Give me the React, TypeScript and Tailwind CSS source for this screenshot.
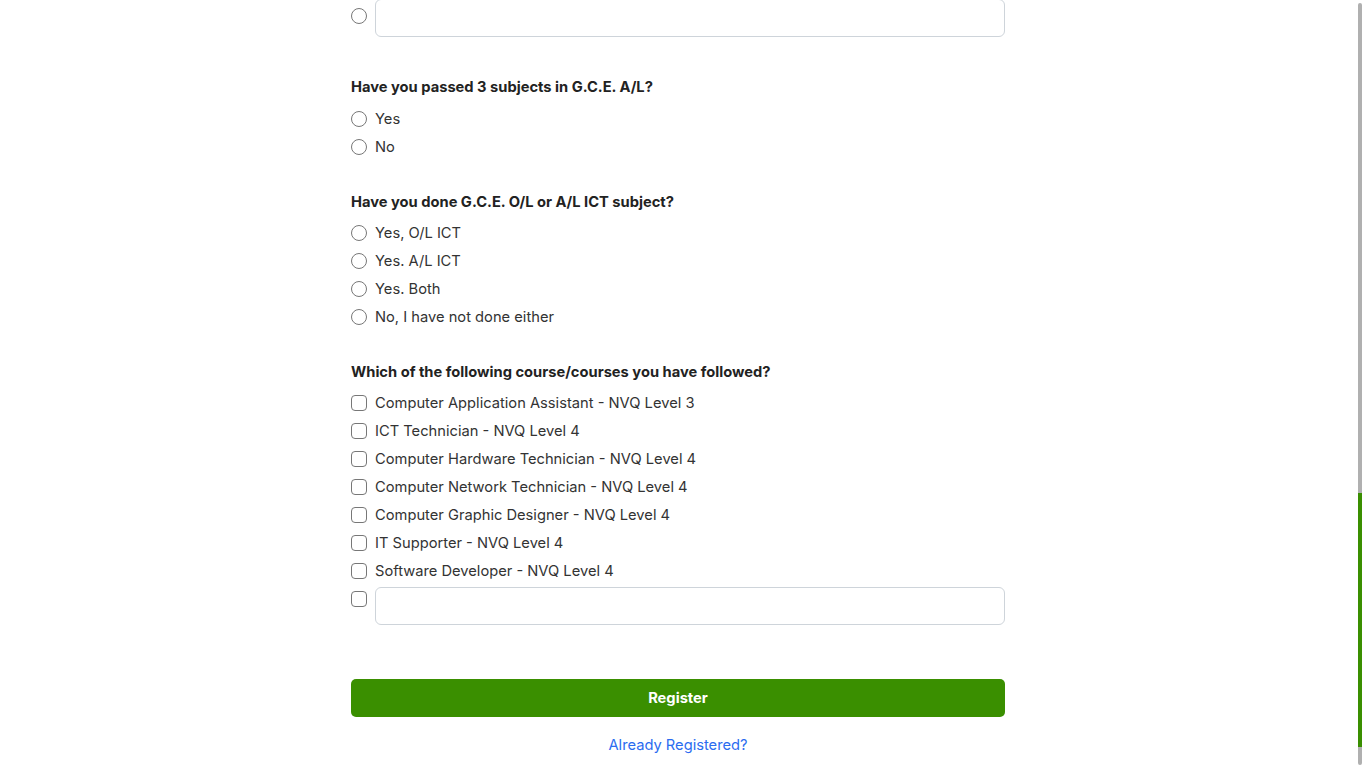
import React from "react";

const font = { fontFamily: "Inter, 'Liberation Sans', sans-serif" };

const RadioRow = ({ label }: { label: string }) => (
  <label className="flex items-center h-7 gap-2 text-[14.7px] text-[#333]">
    <span className="w-4 h-4 rounded-full border border-[#777] bg-white shrink-0" />
    <span>{label}</span>
  </label>
);

const CheckRow = ({ label }: { label: string }) => (
  <label className="flex items-center h-7 gap-2 text-[14.7px] text-[#333]">
    <span className="w-4 h-4 rounded-[4px] border border-[#777] bg-white shrink-0" />
    <span>{label}</span>
  </label>
);

const Question = ({ children }: { children: React.ReactNode }) => (
  <p className="h-[22px] leading-[22px] text-[14.7px] font-bold text-[#222]">{children}</p>
);

export default function App() {
  const courses = [
    "Computer Application Assistant - NVQ Level 3",
    "ICT Technician - NVQ Level 4",
    "Computer Hardware Technician - NVQ Level 4",
    "Computer Network Technician - NVQ Level 4",
    "Computer Graphic Designer - NVQ Level 4",
    "IT Supporter - NVQ Level 4",
    "Software Developer - NVQ Level 4",
  ];

  return (
    <div className="min-h-screen bg-white overflow-hidden" style={font}>
      <div className="flex justify-center pr-[10px]">
        <div className="w-[654px] -mt-px">
          <div className="flex items-start gap-2">
            <span className="mt-[9px] w-4 h-4 rounded-full border border-[#777] shrink-0" />
            <input className="flex-1 h-[38px] rounded-[6px] border border-[#ced4da] px-3 outline-none" />
          </div>

          <div className="mt-[39px]">
            <Question>Have you passed 3 subjects in G.C.E. A/L?</Question>
            <div className="mt-[7px]">
              <RadioRow label="Yes" />
              <RadioRow label="No" />
            </div>
          </div>

          <div className="mt-[30px]">
            <Question>Have you done G.C.E. O/L or A/L ICT subject?</Question>
            <div className="mt-[6px]">
              <RadioRow label="Yes, O/L ICT" />
              <RadioRow label="Yes. A/L ICT" />
              <RadioRow label="Yes. Both" />
              <RadioRow label="No, I have not done either" />
            </div>
          </div>

          <div className="mt-[30px]">
            <Question>Which of the following course/courses you have followed?</Question>
            <div className="mt-[6px]">
              {courses.map((c) => (
                <CheckRow key={c} label={c} />
              ))}
            </div>
            <div className="mt-[2px] flex items-start gap-2">
              <span className="mt-[4px] w-4 h-4 rounded-[4px] border border-[#777] shrink-0" />
              <input className="flex-1 h-[38px] rounded-[6px] border border-[#ced4da] px-3 outline-none" />
            </div>
          </div>

          <button className="mt-[54px] w-full h-[38px] rounded-[5px] bg-[#3a8f00] text-white text-[14.7px] font-bold">
            Register
          </button>
          <div className="mt-[16px] text-center leading-[22px]">
            <a href="#" className="text-[14.7px] text-[#2b6cf0]">
              Already Registered?
            </a>
          </div>
        </div>
      </div>

      <div className="fixed right-[4px] top-[3px] bottom-[3px] w-[4px] rounded-full bg-[#b0b0b0]">
        <div className="absolute left-0 right-0 top-[490px] h-[254px] bg-[#3a8f00]" />
      </div>
    </div>
  );
}
